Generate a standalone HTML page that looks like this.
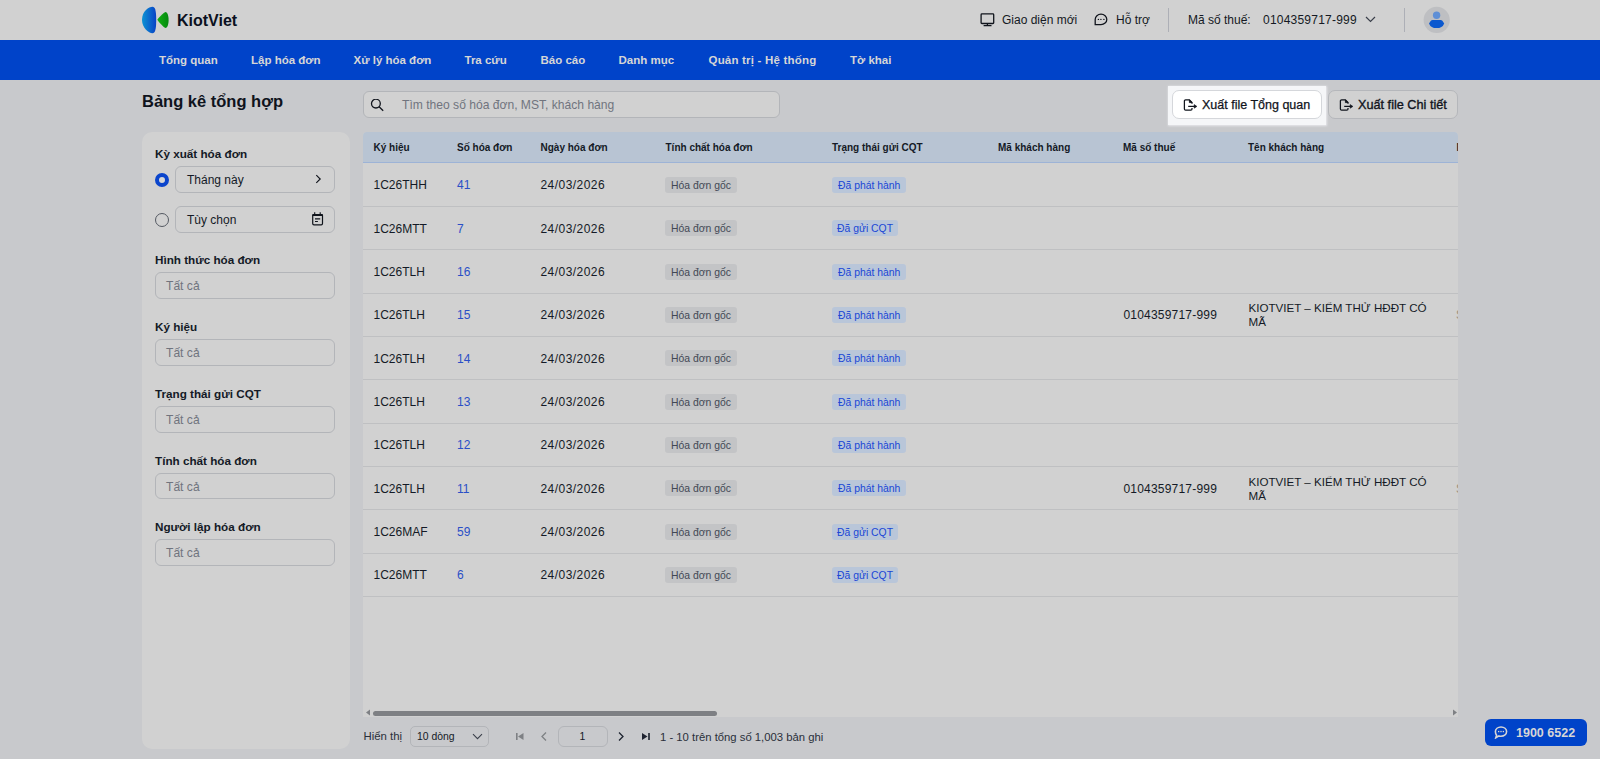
<!DOCTYPE html>
<html><head><meta charset="utf-8">
<style>
*{box-sizing:border-box;margin:0;padding:0}
html,body{width:1600px;height:759px;overflow:hidden}
body{background:#C8C9CC;font-family:"Liberation Sans",sans-serif;color:#141A26;position:relative}
.a{position:absolute;white-space:nowrap}
#hdr{left:0;top:0;width:1600px;height:40px;background:#D1D1D1}
#nav{left:0;top:40px;width:1600px;height:40px;background:#0043C9}
.nv{top:52px;font-size:11.5px;font-weight:700;color:#D6D6D6;line-height:16px}
.ht{font-size:12px;color:#141923;line-height:16px;top:12px}
.sep{width:1px;background:#ADAFB6;top:7.5px;height:24.5px}
#title{left:142px;top:90px;font-size:16.5px;font-weight:700;line-height:22px;color:#0F131C}
#search{left:363px;top:91px;width:417px;height:27px;border:1px solid #B3B5B9;border-radius:6px;background:#D1D1D1}
#panel{left:142px;top:132px;width:208px;height:617px;background:#D1D1D1;border-radius:10px}
.lbl{font-size:11.7px;font-weight:700;line-height:14px;color:#141A26}
.inp{width:180px;height:26.5px;border:1px solid #B3B5B9;border-radius:6px;background:#D1D1D1}
.ph{font-size:12.1px;color:#70747E;line-height:16px}
#tbl{left:363px;top:132px;width:1095px;height:585px;background:#D1D1D1;border-radius:4px 4px 0 0;overflow:hidden}
#th{left:0;top:0;width:1095px;height:31px;background:#B8C4D3;border-bottom:1px solid #9DB3D6}
.hc{top:10px;font-size:10px;font-weight:700;line-height:12px;color:#141A26}
.row{left:0;width:1095px;height:43.4px;border-bottom:1px solid #BFC0C2}
.c{font-size:12px;line-height:16px;color:#141A26}
.tag{height:16px;border-radius:3px;font-size:10.4px;line-height:17.8px;padding:0 6px}
.tg{background:#C3C4C6;color:#424855}
.tb{background:#B9C6D9;color:#1A47D6}
</style></head><body>
<div class="a" id="hdr"></div>
<svg class="a" style="left:140px;top:5px" width="32" height="30" viewBox="0 0 32 30">
<defs><linearGradient id="lg" x1="0" y1="0" x2="1" y2="0"><stop offset="0" stop-color="#0C93D3"/><stop offset="1" stop-color="#0842C6"/></linearGradient><linearGradient id="lg2" x1="0" y1="0" x2="1" y2="0"><stop offset="0" stop-color="#12B012"/><stop offset="1" stop-color="#05880F"/></linearGradient></defs>
<path d="M12.5 1.8 C9 1.8 2 6 2 14.8 C2 23 8.5 28.2 12.5 28.2 C15 28.2 16.2 25 16.2 15 C16.2 5 15 1.8 12.5 1.8Z" fill="url(#lg)"/>
<path d="M25.5 7 C24.5 7 20 11 17.3 14.8 C20 18.8 24.5 23 25.5 23 C27.5 23 28.6 19 28.6 15 C28.6 11 27.5 7 25.5 7Z" fill="url(#lg2)"/>
</svg>
<div class="a" style="left:177px;top:11px;font-size:16px;font-weight:700;line-height:20px;color:#0B1020">KiotViet</div>
<svg class="a" style="left:980px;top:12px" width="15" height="15" viewBox="0 0 15 15" fill="none" stroke="#10141C" stroke-width="1.3"><rect x="1.1" y="1.9" width="12.6" height="9.6" rx="0.8"/><path d="M7.4 11.5v2M3.6 13.6h7.9"/></svg>
<div class="a ht" style="left:1002px">Giao diện mới</div>
<svg class="a" style="left:1093px;top:13px" width="16" height="14" viewBox="0 0 16 14" fill="none" stroke="#10141C" stroke-width="1.3"><path d="M8 1.2A5.8 5.2 0 1 1 8 11.6H2.2V6.4A5.8 5.2 0 0 1 8 1.2z"/><circle cx="5.4" cy="6.4" r=".7" fill="#10141C" stroke="none"/><circle cx="7.9" cy="6.4" r=".7" fill="#10141C" stroke="none"/><circle cx="10.9" cy="6.4" r=".7" fill="#10141C" stroke="none"/></svg>
<div class="a ht" style="left:1116px">Hỗ trợ</div>
<div class="a sep" style="left:1168px"></div>
<div class="a ht" style="left:1188px">Mã số thuế:</div>
<div class="a ht" style="left:1263px;letter-spacing:0.22px">0104359717-999</div>
<svg class="a" style="left:1365px;top:16px" width="11" height="7" viewBox="0 0 11 7" fill="none" stroke="#3A3F4A" stroke-width="1.2"><path d="M1 1l4.5 4.5L10 1"/></svg>
<div class="a sep" style="left:1404px"></div>
<svg class="a" style="left:1423px;top:6px" width="28" height="28" viewBox="0 0 28 28"><circle cx="13.7" cy="13.9" r="13.1" fill="#BEBFC2"/><circle cx="13.6" cy="9.3" r="3.7" fill="#5F8FD6"/><path d="M9.6 13.9H17.6Q18.6 13.9 19.4 14.7L21.2 17.4Q19.4 22.1 13.6 22.1Q7.8 22.1 6 17.4L7.8 14.7Q8.6 13.9 9.6 13.9z" fill="#0B58CF"/></svg>
<div class="a" id="nav"></div>
<div class="a nv" style="left:159px">Tổng quan</div>
<div class="a nv" style="left:251px">Lập hóa đơn</div>
<div class="a nv" style="left:353.5px">Xử lý hóa đơn</div>
<div class="a nv" style="left:464.5px">Tra cứu</div>
<div class="a nv" style="left:540.5px">Báo cáo</div>
<div class="a nv" style="left:618.5px">Danh mục</div>
<div class="a nv" style="left:708.5px;letter-spacing:0.2px">Quản trị - Hệ thống</div>
<div class="a nv" style="left:850px">Tờ khai</div>
<div class="a" id="title">Bảng kê tổng hợp</div>
<div class="a" id="search"></div>
<svg class="a" style="left:370px;top:99px" width="15" height="14" viewBox="0 0 15 14" fill="none" stroke="#10141C" stroke-width="1.3"><circle cx="5.9" cy="4.6" r="4.4"/><path d="M9.1 7.8l4.1 4"/></svg>
<div class="a ph" style="left:402px;top:97px">Tìm theo số hóa đơn, MST, khách hàng</div>
<div class="a" style="left:1168px;top:85.5px;width:158px;height:39.5px;background:#F5F6F8;box-shadow:0 0 2px 0.5px rgba(240,241,244,0.8)"></div>
<div class="a" style="left:1172px;top:90px;width:150px;height:29px;background:#FFFFFF;border:1px solid #D5D7DB;border-radius:7px"></div>
<svg class="a" style="left:1183px;top:99px" width="15" height="13" viewBox="0 0 15 13" fill="none" stroke="#10141C" stroke-width="1.25"><path d="M9 4.8V3.6L6.4 0.9H2.6Q1.4 0.9 1.4 2.1V9.9Q1.4 11.1 2.6 11.1H7.8Q9 11.1 9 9.9V9.1"/><path d="M6.4 0.9L9 3.6H6.4z" fill="#10141C" stroke-width="0.8"/><path d="M5.2 7.4h6.6"/><path d="M11.2 5.6L13.9 7.4L11.2 9.2z" fill="#10141C" stroke-width="0.6"/></svg>
<div class="a" style="left:1202px;top:97px;font-size:12.5px;line-height:16px;color:#10141C;-webkit-text-stroke:0.25px #10141C">Xuất file Tổng quan</div>
<div class="a" style="left:1328px;top:90px;width:130px;height:29px;background:#D1D1D1;border:1px solid #B5B7BB;border-radius:7px"></div>
<svg class="a" style="left:1339px;top:99px" width="15" height="13" viewBox="0 0 15 13" fill="none" stroke="#10141C" stroke-width="1.25"><path d="M9 4.8V3.6L6.4 0.9H2.6Q1.4 0.9 1.4 2.1V9.9Q1.4 11.1 2.6 11.1H7.8Q9 11.1 9 9.9V9.1"/><path d="M6.4 0.9L9 3.6H6.4z" fill="#10141C" stroke-width="0.8"/><path d="M5.2 7.4h6.6"/><path d="M11.2 5.6L13.9 7.4L11.2 9.2z" fill="#10141C" stroke-width="0.6"/></svg>
<div class="a" style="left:1358px;top:97px;font-size:12.7px;font-weight:400;line-height:16px;color:#10141C;-webkit-text-stroke:0.35px #10141C">Xuất file Chi tiết</div>
<div class="a" id="panel"></div>
<div class="a lbl" style="left:155px;top:146.8px">Kỳ xuất hóa đơn</div>
<div class="a" style="left:155px;top:173px;width:14px;height:14px;border-radius:50%;border:4px solid #0B45CC;background:#D8D8D8"></div>
<div class="a inp" style="left:175px;top:166px;width:160px"></div>
<div class="a c" style="left:187px;top:172px">Tháng này</div>
<svg class="a" style="left:314px;top:174px" width="8" height="10" viewBox="0 0 8 10" fill="none" stroke="#10141C" stroke-width="1.15"><path d="M2.3 1.2l3.9 3.8-3.9 3.8"/></svg>
<div class="a" style="left:155px;top:213px;width:14px;height:14px;border-radius:50%;border:1px solid #545962"></div>
<div class="a inp" style="left:175px;top:206px;width:160px"></div>
<div class="a c" style="left:187px;top:212px">Tùy chọn</div>
<svg class="a" style="left:311px;top:211px" width="13" height="16" viewBox="0 0 13 16" fill="none" stroke="#10141C" stroke-width="1.2"><rect x="1.7" y="3.7" width="9.8" height="10.1" rx="1.3"/><path d="M1.1 4.9V4.4Q1.1 3.1 2.4 3.1H10.8Q12.1 3.1 12.1 4.4V4.9z" fill="#10141C" stroke="none"/><path d="M3.7 1.3v2M9.2 1.3v2" stroke-width="1.1"/><path d="M4 7.9H9.2M4 10.5H6.9"/></svg>
<div class="a lbl" style="left:155px;top:253.2px">Hình thức hóa đơn</div>
<div class="a inp" style="left:155px;top:272px;width:180px"></div>
<div class="a ph" style="left:166px;top:278px">Tất cả</div>
<div class="a lbl" style="left:155px;top:320.2px">Ký hiệu</div>
<div class="a inp" style="left:155px;top:339px;width:180px"></div>
<div class="a ph" style="left:166px;top:345px">Tất cả</div>
<div class="a lbl" style="left:155px;top:387.2px">Trạng thái gửi CQT</div>
<div class="a inp" style="left:155px;top:406px;width:180px"></div>
<div class="a ph" style="left:166px;top:412px">Tất cả</div>
<div class="a lbl" style="left:155px;top:453.7px">Tính chất hóa đơn</div>
<div class="a inp" style="left:155px;top:472.5px;width:180px"></div>
<div class="a ph" style="left:166px;top:478.5px">Tất cả</div>
<div class="a lbl" style="left:155px;top:520.2px">Người lập hóa đơn</div>
<div class="a inp" style="left:155px;top:539px;width:180px"></div>
<div class="a ph" style="left:166px;top:545px">Tất cả</div>
<div class="a" id="tbl"><div class="a" id="th"></div><div class="a hc" style="left:10.5px">Ký hiệu</div><div class="a hc" style="left:94px">Số hóa đơn</div><div class="a hc" style="left:177.5px">Ngày hóa đơn</div><div class="a hc" style="left:302.5px">Tính chất hóa đơn</div><div class="a hc" style="left:469px">Trạng thái gửi CQT</div><div class="a hc" style="left:635px">Mã khách hàng</div><div class="a hc" style="left:760px">Mã số thuế</div><div class="a hc" style="left:885px">Tên khách hàng</div><div class="a hc" style="left:1093.5px">N</div><div class="a row" style="top:31.50px;height:43.35px"></div><div class="a c" style="left:10.5px;top:45.17px">1C26THH</div><div class="a c" style="left:94px;top:45.17px;color:#2A4FC7">41</div><div class="a c" style="left:177.5px;top:45.17px;letter-spacing:0.45px">24/03/2026</div><div class="a tag tg" style="left:302px;top:44.88px">Hóa đơn gốc</div><div class="a tag tb" style="left:469px;top:44.88px">Đã phát hành</div><div class="a row" style="top:74.85px;height:43.35px"></div><div class="a c" style="left:10.5px;top:88.52px">1C26MTT</div><div class="a c" style="left:94px;top:88.52px;color:#2A4FC7">7</div><div class="a c" style="left:177.5px;top:88.52px;letter-spacing:0.45px">24/03/2026</div><div class="a tag tg" style="left:302px;top:88.22px">Hóa đơn gốc</div><div class="a tag tb" style="left:469px;top:88.22px;padding:0 5px">Đã gửi CQT</div><div class="a row" style="top:118.20px;height:43.35px"></div><div class="a c" style="left:10.5px;top:131.88px">1C26TLH</div><div class="a c" style="left:94px;top:131.88px;color:#2A4FC7">16</div><div class="a c" style="left:177.5px;top:131.88px;letter-spacing:0.45px">24/03/2026</div><div class="a tag tg" style="left:302px;top:131.57px">Hóa đơn gốc</div><div class="a tag tb" style="left:469px;top:131.57px">Đã phát hành</div><div class="a row" style="top:161.55px;height:43.35px"></div><div class="a c" style="left:10.5px;top:175.23px">1C26TLH</div><div class="a c" style="left:94px;top:175.23px;color:#2A4FC7">15</div><div class="a c" style="left:177.5px;top:175.23px;letter-spacing:0.45px">24/03/2026</div><div class="a tag tg" style="left:302px;top:174.93px">Hóa đơn gốc</div><div class="a tag tb" style="left:469px;top:174.93px">Đã phát hành</div><div class="a c" style="left:760.5px;top:175.23px;letter-spacing:0.2px">0104359717-999</div><div class="a c" style="left:885.5px;top:169.23px;line-height:14px;font-size:11.6px;white-space:normal;width:200px">KIOTVIET – KIỂM THỬ HĐĐT CÓ<br>MÃ</div><div class="a c" style="left:1093px;top:175.23px;color:#9A9080">S</div><div class="a row" style="top:204.90px;height:43.35px"></div><div class="a c" style="left:10.5px;top:218.58px">1C26TLH</div><div class="a c" style="left:94px;top:218.58px;color:#2A4FC7">14</div><div class="a c" style="left:177.5px;top:218.58px;letter-spacing:0.45px">24/03/2026</div><div class="a tag tg" style="left:302px;top:218.28px">Hóa đơn gốc</div><div class="a tag tb" style="left:469px;top:218.28px">Đã phát hành</div><div class="a row" style="top:248.25px;height:43.35px"></div><div class="a c" style="left:10.5px;top:261.93px">1C26TLH</div><div class="a c" style="left:94px;top:261.93px;color:#2A4FC7">13</div><div class="a c" style="left:177.5px;top:261.93px;letter-spacing:0.45px">24/03/2026</div><div class="a tag tg" style="left:302px;top:261.62px">Hóa đơn gốc</div><div class="a tag tb" style="left:469px;top:261.62px">Đã phát hành</div><div class="a row" style="top:291.60px;height:43.35px"></div><div class="a c" style="left:10.5px;top:305.28px">1C26TLH</div><div class="a c" style="left:94px;top:305.28px;color:#2A4FC7">12</div><div class="a c" style="left:177.5px;top:305.28px;letter-spacing:0.45px">24/03/2026</div><div class="a tag tg" style="left:302px;top:304.98px">Hóa đơn gốc</div><div class="a tag tb" style="left:469px;top:304.98px">Đã phát hành</div><div class="a row" style="top:334.95px;height:43.35px"></div><div class="a c" style="left:10.5px;top:348.62px">1C26TLH</div><div class="a c" style="left:94px;top:348.62px;color:#2A4FC7">11</div><div class="a c" style="left:177.5px;top:348.62px;letter-spacing:0.45px">24/03/2026</div><div class="a tag tg" style="left:302px;top:348.32px">Hóa đơn gốc</div><div class="a tag tb" style="left:469px;top:348.32px">Đã phát hành</div><div class="a c" style="left:760.5px;top:348.62px;letter-spacing:0.2px">0104359717-999</div><div class="a c" style="left:885.5px;top:342.62px;line-height:14px;font-size:11.6px;white-space:normal;width:200px">KIOTVIET – KIỂM THỬ HĐĐT CÓ<br>MÃ</div><div class="a c" style="left:1093px;top:348.62px;color:#9A9080">S</div><div class="a row" style="top:378.30px;height:43.35px"></div><div class="a c" style="left:10.5px;top:391.98px">1C26MAF</div><div class="a c" style="left:94px;top:391.98px;color:#2A4FC7">59</div><div class="a c" style="left:177.5px;top:391.98px;letter-spacing:0.45px">24/03/2026</div><div class="a tag tg" style="left:302px;top:391.68px">Hóa đơn gốc</div><div class="a tag tb" style="left:469px;top:391.68px;padding:0 5px">Đã gửi CQT</div><div class="a row" style="top:421.65px;height:43.35px"></div><div class="a c" style="left:10.5px;top:435.33px">1C26MTT</div><div class="a c" style="left:94px;top:435.33px;color:#2A4FC7">6</div><div class="a c" style="left:177.5px;top:435.33px;letter-spacing:0.45px">24/03/2026</div><div class="a tag tg" style="left:302px;top:435.03px">Hóa đơn gốc</div><div class="a tag tb" style="left:469px;top:435.03px;padding:0 5px">Đã gửi CQT</div><div class="a" style="left:10px;top:579px;width:344px;height:5px;border-radius:3px;background:#7E8084"></div><svg class="a" style="left:2px;top:577px" width="6" height="7" viewBox="0 0 6 7"><path d="M5 0.5v6L1 3.5z" fill="#7E8084"/></svg><svg class="a" style="left:1089px;top:577px" width="6" height="7" viewBox="0 0 6 7"><path d="M1 0.5v6L5 3.5z" fill="#7E8084"/></svg></div>
<div class="a" style="left:363.5px;top:729px;font-size:11.4px;line-height:14px;color:#2A2F3A">Hiển thị</div>
<div class="a" style="left:409.5px;top:726px;width:79px;height:20.5px;border:1px solid #B3B5B9;border-radius:5px"></div>
<div class="a" style="left:417px;top:729.5px;font-size:10.4px;line-height:14px;color:#141A26">10 dòng</div>
<svg class="a" style="left:471.5px;top:732.5px" width="11" height="7" viewBox="0 0 11 7" fill="none" stroke="#3A3F4A" stroke-width="1.05"><path d="M1 1.2l4.5 4.5 4.5-4.5"/></svg>
<svg class="a" style="left:515px;top:732px" width="9" height="9" viewBox="0 0 9 9"><rect x="1" y="1" width="1.6" height="7" fill="#7E8084"/><path d="M8.5 1v7L3 4.5z" fill="#7E8084"/></svg>
<svg class="a" style="left:540px;top:731px" width="8" height="11" viewBox="0 0 8 11" fill="none" stroke="#7E8084" stroke-width="1.3"><path d="M6 1.5L2 5.5l4 4"/></svg>
<div class="a" style="left:557.5px;top:726px;width:50px;height:20.5px;border:1px solid #B3B5B9;border-radius:6px"></div>
<div class="a" style="left:557.5px;top:729.5px;width:50px;text-align:center;font-size:10.4px;line-height:14px;color:#141A26">1</div>
<svg class="a" style="left:617px;top:731px" width="8" height="11" viewBox="0 0 8 11" fill="none" stroke="#1E2330" stroke-width="1.3"><path d="M2 1.5l4 4-4 4"/></svg>
<svg class="a" style="left:641px;top:732px" width="10" height="9" viewBox="0 0 10 9"><path d="M1 1v7L6.5 4.5z" fill="#1E2330"/><rect x="7.2" y="1" width="1.6" height="7" fill="#1E2330"/></svg>
<div class="a" style="left:660px;top:729.5px;font-size:11.3px;line-height:14px;color:#2A2F3A">1 - 10 trên tổng số 1,003 bản ghi</div>
<div class="a" style="left:1485px;top:719px;width:102px;height:26.5px;background:#0043C9;border-radius:6px"></div>
<svg class="a" style="left:1494px;top:726px" width="14" height="13" viewBox="0 0 14 13" fill="none" stroke="#D6D6D6" stroke-width="1.6"><path d="M7 1c3.1 0 5.6 2 5.6 4.6S10.1 10.2 7 10.2c-.7 0-1.4-.1-2-.3L1.8 11.8l.8-2.6C1.8 8.3 1.4 7 1.4 5.6 1.4 3 3.9 1 7 1z"/><rect x="4" y="4.9" width="1.3" height="1.3" fill="#D6D6D6" stroke="none"/><rect x="6.35" y="4.9" width="1.3" height="1.3" fill="#D6D6D6" stroke="none"/><rect x="8.7" y="4.9" width="1.3" height="1.3" fill="#D6D6D6" stroke="none"/></svg>
<div class="a" style="left:1516px;top:724.5px;font-size:12.5px;font-weight:700;line-height:16px;color:#D6D6D6">1900 6522</div>
</body></html>
